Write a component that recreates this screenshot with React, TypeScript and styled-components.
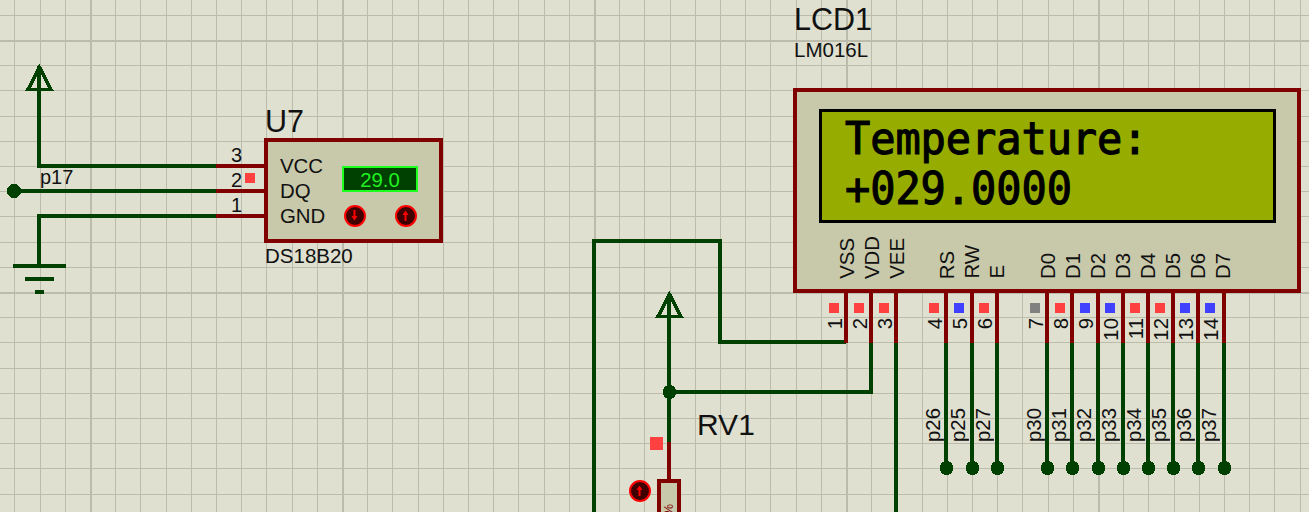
import React from "react";
import styled, { createGlobalStyle } from "styled-components";

const PAPER = "#dfe0d0";
const GRID = "#bcbcac";
const WIRE = "#004000";
const PIN = "#800000";
const BODY = "#c8c8aa";
const RED = "#ff4040";
const BLUE = "#4040ff";
const GREY = "#808080";

const Global = createGlobalStyle`
  html, body { margin: 0; padding: 0; background: ${PAPER}; overflow: hidden; }
  body { font-family: "Liberation Sans", Arial, sans-serif; color: #111; }
`;

const Canvas = styled.main`
  position: relative;
  width: 1309px;
  height: 512px;
  overflow: hidden;
  background: ${PAPER};
`;

const Drawing = styled.svg`
  position: absolute;
  inset: 0;
  display: block;
`;

/* A part placed on the free schematic canvas */
const Node = styled.section<{ $x: number; $y: number }>`
  position: absolute;
  left: ${(p) => p.$x}px;
  top: ${(p) => p.$y}px;
`;

const NetName = styled(Node)`
  font-size: 20px;
  line-height: 1;
`;

const Designator = styled.h2`
  margin: 0;
  font-weight: 400;
  font-size: 30.5px;
  line-height: 1;
  white-space: nowrap;
`;

const PartName = styled.div`
  font-size: 20.5px;
  line-height: 1;
  white-space: nowrap;
`;

const Square = styled.i<{ $color: string }>`
  display: block;
  flex: none;
  width: 10px;
  height: 10px;
  background: ${(p) => p.$color};
`;

const Casing = styled.div`
  box-sizing: border-box;
  border: 4px solid ${PIN};
  background: ${BODY};
`;

/* DS18B20 */
const SensorNode = styled(Node)`
  display: grid;
  grid-template-columns: 33px 179px;
`;
const SensorTitle = styled(Designator)`
  grid-column: 2;
  padding-left: 1px;
  margin-bottom: 1.3px;
`;
const SensorNumbers = styled.div`
  display: flex;
  flex-direction: column;
  padding-top: 4.6px;
`;
const SensorNumber = styled.div`
  display: flex;
  gap: 3px;
  font-size: 20px;
  line-height: 25px;
  height: 25px;
`;
const SensorState = styled(Square)`
  margin-top: 5px;
`;
const SensorBody = styled(Casing)`
  height: 105px;
  display: flex;
  padding: 12px 0 0 12px;
`;
const SensorFooter = styled(PartName)`
  grid-column: 2;
  padding: 2.6px 0 0 1px;
`;
const SensorPins = styled.div`
  width: 62px;
  display: flex;
  flex-direction: column;
`;
const SensorPin = styled.span`
  font-size: 20.4px;
  line-height: 25.2px;
  height: 25.2px;
`;
const SensorControls = styled.div`
  width: 76px;
  margin-top: 12px;
  display: flex;
  flex-direction: column;
  gap: 13.5px;
`;
const Readout = styled.output`
  height: 26px;
  box-sizing: border-box;
  border: 2px solid #1cff1c;
  background: ${WIRE};
  color: #20f020;
  font-size: 20.4px;
  line-height: 24px;
  text-align: center;
`;
const KnobRow = styled.div`
  display: flex;
  justify-content: space-between;
  padding: 0 1.5px;
`;
const KnobFace = styled.span`
  display: block;
  flex: none;
  width: 22px;
  height: 22px;
  box-sizing: border-box;
  border-radius: 50%;
  border: 2.5px solid #ff0000;
  background: #400000;
`;
const KnobArrow = styled.svg`
  display: block;
  width: 17px;
  height: 17px;
`;

const Knob = ({ dir }: { dir: "up" | "down" }) => (
  <KnobFace>
    <KnobArrow viewBox="0 0 17 17">
      {dir === "up" ? (
        <path d="M7.5 14V8H5.5L8.5 3.5L11.5 8H9.5V14Z" fill="#ff0000" />
      ) : (
        <path d="M7.5 3V9H5.5L8.5 13.5L11.5 9H9.5V3Z" fill="#ff0000" />
      )}
    </KnobArrow>
  </KnobFace>
);

/* LCD */
const LcdNode = styled(Node)`
  width: 508px;
  display: flex;
  flex-direction: column;
`;
const LcdTitle = styled(Designator)`
  padding-left: 1px;
`;
const LcdModel = styled(PartName)`
  padding: 5.4px 0 27.3px 1px;
`;
const LcdBody = styled(Casing)`
  height: 205px;
  display: flex;
  flex-direction: column;
  padding: 17px 0 0 22px;
`;
const Screen = styled.div`
  width: 457px;
  height: 114px;
  box-sizing: border-box;
  border: 3px solid #000;
  background: #96ad00;
  padding: 3px 0 0 23px;
`;
const ScreenLine = styled.div`
  font-family: "DejaVu Sans Mono", "Liberation Mono", monospace;
  font-weight: 400;
  -webkit-text-stroke: 1.1px #000;
  font-size: 42px;
  letter-spacing: -0.08px;
  line-height: 50px;
  height: 50px;
  color: #000;
  white-space: pre;
  transform: scaleY(1.07);
  transform-origin: 0 40px;
`;
const PinNames = styled.div`
  display: grid;
  grid-template-columns: repeat(17, 25.13px);
  align-items: end;
  height: 44px;
  margin: 12px 0 0 17.5px;
`;
const SideText = styled.span`
  display: block;
  writing-mode: vertical-rl;
  transform: rotate(180deg);
  font-size: 20.4px;
  line-height: 20px;
  width: 20px;
  white-space: nowrap;
`;
const PinBank = styled.div`
  display: grid;
  grid-template-columns: repeat(16, 25.13px);
  margin: 10px 0 0 35.5px;
`;
const PinColumn = styled.div`
  height: 139px;
  display: flex;
  flex-direction: column;
  align-items: flex-start;
`;
const PinNumber = styled(SideText)`
  margin: 5px 0 0 -4px;
`;
const PinNet = styled(SideText)`
  margin: auto 0 0 -6px;
`;

/* RV1 */
const RvNode = styled(Node)`
  display: flex;
  flex-direction: column;
`;
const RvHead = styled.div`
  height: 69px;
  display: flex;
  padding-left: 21px;
`;
const RvState = styled(Square)`
  width: 13px;
  height: 13px;
  margin: 27px 34px 0 0;
`;
const RvTitle = styled(Designator)`
  font-size: 30px;
`;
const RvBottom = styled.div`
  display: flex;
  gap: 6px;
  align-items: flex-start;
`;
const RvKnobSlot = styled.div`
  margin-top: 1px;
`;
const RvBody = styled(Casing)`
  width: 24px;
  height: 70px;
  padding: 21px 0 0 1px;
`;
const RvValue = styled.span`
  display: block;
  writing-mode: vertical-rl;
  transform: rotate(180deg);
  font-size: 13px;
  line-height: 13px;
  width: 13px;
  color: ${PIN};
`;

/* Data */
const xLines = Array.from({ length: 52 }, (_, k) => ({ at: Math.round(14.4 + 25.2 * k), major: k % 10 === 3 }));
const yLines = Array.from({ length: 21 }, (_, k) => ({ at: Math.round(14.8 + 25.2 * k), major: k % 10 === 1 }));

type LcdPin = { n?: number; x?: number; c?: string; net?: string };
const lcdPins: LcdPin[] = [
  { n: 1, x: 846, c: RED },
  { n: 2, x: 871, c: RED },
  { n: 3, x: 896, c: RED },
  {},
  { n: 4, x: 946, c: RED, net: "p26" },
  { n: 5, x: 972, c: BLUE, net: "p25" },
  { n: 6, x: 997, c: RED, net: "p27" },
  {},
  { n: 7, x: 1047, c: GREY, net: "p30" },
  { n: 8, x: 1072, c: RED, net: "p31" },
  { n: 9, x: 1098, c: BLUE, net: "p32" },
  { n: 10, x: 1123, c: BLUE, net: "p33" },
  { n: 11, x: 1148, c: RED, net: "p34" },
  { n: 12, x: 1173, c: RED, net: "p35" },
  { n: 13, x: 1198, c: BLUE, net: "p36" },
  { n: 14, x: 1224, c: BLUE, net: "p37" },
];
const realPins = lcdPins.filter((p) => p.n);
const netPins = realPins.filter((p) => p.net);

const lcdPinNames = ["VSS", "VDD", "VEE", "", "RS", "RW", "E", "", "D0", "D1", "D2", "D3", "D4", "D5", "D6", "D7"];

const wirePaths = [
  "M39 66V166H218",
  "M14 191H218",
  "M39 266V216H218",
  "M594 512V241H720V342H846",
  "M669 294V442",
  "M669 392H871V343",
  "M896 343V512",
  ...netPins.map((p) => `M${p.x} 343V468`),
];

const pinPaths = [
  "M216 166H266",
  "M216 191H266",
  "M216 216H266",
  "M669 442V482",
  ...realPins.map((p) => `M${p.x} 292V343`),
];

const Terminal = ({ x, y }: { x: number; y: number }) => (
  <path d={`M${x + 0.5} ${y + 2.5}L${x - 11} ${y + 24.5}H${x + 12}Z`} fill="none" stroke={WIRE} strokeWidth={3.6} />
);

export default function App() {
  return (
    <Canvas>
      <Global />
      <Drawing width={1309} height={512} viewBox="0 0 1309 512" shapeRendering="crispEdges">
        {xLines.map((l) => (
          <rect key={`x${l.at}`} x={l.at} y={0} width={l.major ? 2 : 1} height={512} fill={GRID} />
        ))}
        {yLines.map((l) => (
          <rect key={`y${l.at}`} x={0} y={l.at} width={1309} height={l.major ? 2 : 1} fill={GRID} />
        ))}
        {wirePaths.map((d) => (
          <path key={d} d={d} fill="none" stroke={WIRE} strokeWidth={4} />
        ))}
        {pinPaths.map((d) => (
          <path key={d} d={d} fill="none" stroke={PIN} strokeWidth={4} />
        ))}
        <path d="M13 266H66M25 279H54M35 292H44" stroke={WIRE} strokeWidth={4} fill="none" />
        <Terminal x={39} y={65} />
        <Terminal x={669} y={292} />
        <circle cx={14} cy={191} r={7} fill={WIRE} />
        <circle cx={669.5} cy={392} r={7} fill={WIRE} />
        {netPins.map((p) => (
          <circle key={p.n} cx={p.x! + 0.5} cy={468} r={7} fill={WIRE} />
        ))}
      </Drawing>

      <NetName $x={40} $y={167}>p17</NetName>

      <SensorNode $x={231} $y={106.2}>
        <SensorTitle>U7</SensorTitle>
        <SensorNumbers>
          <SensorNumber>3</SensorNumber>
          <SensorNumber>
            2<SensorState $color={RED} />
          </SensorNumber>
          <SensorNumber>1</SensorNumber>
        </SensorNumbers>
        <SensorBody>
          <SensorPins>
            <SensorPin>VCC</SensorPin>
            <SensorPin>DQ</SensorPin>
            <SensorPin>GND</SensorPin>
          </SensorPins>
          <SensorControls>
            <Readout>29.0</Readout>
            <KnobRow>
              <Knob dir="down" />
              <Knob dir="up" />
            </KnobRow>
          </SensorControls>
        </SensorBody>
        <SensorFooter>DS18B20</SensorFooter>
      </SensorNode>

      <LcdNode $x={793} $y={4.2}>
        <LcdTitle>LCD1</LcdTitle>
        <LcdModel>LM016L</LcdModel>
        <LcdBody>
          <Screen>
            <ScreenLine>Temperature:</ScreenLine>
            <ScreenLine>+029.0000</ScreenLine>
          </Screen>
          <PinNames>
            {lcdPinNames.map((name, i) => (
              <SideText key={i}>{name}</SideText>
            ))}
          </PinNames>
        </LcdBody>
        <PinBank>
          {lcdPins.map((p, i) => (
            <PinColumn key={i}>
              {p.n && (
                <>
                  <Square $color={p.c!} />
                  <PinNumber>{p.n}</PinNumber>
                  {p.net && <PinNet>{p.net}</PinNet>}
                </>
              )}
            </PinColumn>
          ))}
        </PinBank>
      </LcdNode>

      <RvNode $x={629} $y={410}>
        <RvHead>
          <RvState $color={RED} />
          <RvTitle>RV1</RvTitle>
        </RvHead>
        <RvBottom>
          <RvKnobSlot>
            <Knob dir="up" />
          </RvKnobSlot>
          <RvBody>
            <RvValue>%</RvValue>
          </RvBody>
        </RvBottom>
      </RvNode>
    </Canvas>
  );
}
